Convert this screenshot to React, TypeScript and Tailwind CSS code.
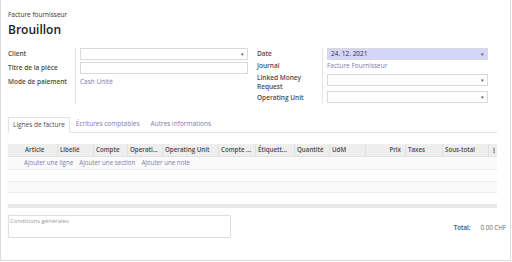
const font = { fontFamily: '"Open Sans", "Noto Sans", sans-serif' };

function Caret() {
  return <span className="absolute right-[3px] top-[3px] text-[5px] leading-none text-[#555]">▾</span>;
}

function Input({ bg = 'bg-white', caret = true, children }: { bg?: string; caret?: boolean; children?: React.ReactNode }) {
  return (
    <div className={`relative h-[12px] border border-[#d9d9d9] ${bg} pl-[3px] text-[6.5px] leading-[10px] text-[#333]`}>
      {children}
      {caret && <Caret />}
    </div>
  );
}

const cols: { label: string; w: string; right?: boolean }[] = [
  { label: '', w: 'w-[15px]' },
  { label: 'Article', w: 'w-[35px]' },
  { label: 'Libellé', w: 'w-[36px]' },
  { label: 'Compte', w: 'w-[34px]' },
  { label: 'Operati...', w: 'w-[35px]' },
  { label: 'Operating Unit', w: 'w-[56px]' },
  { label: 'Compte ...', w: 'w-[37px]' },
  { label: 'Étiquett...', w: 'w-[39px]' },
  { label: 'Quantité', w: 'w-[35px]' },
  { label: 'UdM', w: 'w-[36px]' },
  { label: 'Prix', w: 'w-[40px]', right: true },
  { label: 'Taxes', w: 'w-[37px]' },
  { label: 'Sous-total', w: 'w-[46px]' },
  { label: '⋮', w: 'flex-1' },
];

export default function App() {
  return (
    <div className="h-[262px] w-[512px] overflow-hidden bg-white" style={font}>
      <div className="h-[261px] w-[511px] border-b border-l border-r border-[#dcdcdc] bg-white pl-[7px] pr-[13px]">
        <div className="pt-[10px] text-[6.5px] text-[#333]">Facture fournisseur</div>
        <div className="mt-[2px] text-[12px] font-semibold leading-[15px] text-[#222]">Brouillon</div>

        <div className="mt-[11px] flex">
          <div className="flex w-[240px]">
            <div className="flex w-[68px] flex-col gap-[2px] border-r border-[#e5e5e5] text-[6.5px] font-semibold text-[#4c4c4c]">
              <div className="flex h-[12px] items-center">Client</div>
              <div className="flex h-[12px] items-center">Titre de la pièce</div>
              <div className="flex h-[12px] items-center">Mode de paiement</div>
            </div>
            <div className="ml-[4px] flex flex-1 flex-col gap-[2px]">
              <Input />
              <Input caret={false} />
              <div className="flex h-[12px] items-center text-[6.5px] text-[#7c7bad]">Cash Unité</div>
            </div>
          </div>

          <div className="ml-[9px] flex w-[231px]">
            <div className="flex w-[66px] flex-col border-r border-[#e5e5e5] pr-[2px] text-[6.5px] font-semibold text-[#4c4c4c]">
              <div className="flex h-[12px] items-center">Date</div>
              <div className="mt-[1px] flex h-[11px] items-center">Journal</div>
              <div className="mt-[1px] leading-[9px]">Linked Money<br />Request</div>
              <div className="mt-[1px] flex h-[12px] items-center">Operating Unit</div>
            </div>
            <div className="ml-[4px] flex flex-1 flex-col">
              <Input bg="bg-[#d4d4fc]">24. 12. 2021</Input>
              <div className="mt-[1px] flex h-[11px] items-center text-[6.5px] text-[#7c7bad]">Facture Fournisseur</div>
              <div className="mt-[2px]"><Input /></div>
              <div className="mt-[5px]"><Input /></div>
            </div>
          </div>
        </div>

        <div className="mt-[13px] flex h-[16px] border-b border-[#e2e2e2] text-[6.5px]">
          <div className="-mb-px flex items-center border border-b-white border-[#e2e2e2] bg-white px-[4px] text-[#4c4c4c]">Lignes de facture</div>
          <div className="flex items-center px-[6px] text-[#7c7bad]">Écritures comptables</div>
          <div className="flex items-center px-[5px] text-[#7c7bad]">Autres informations</div>
        </div>

        <div className="mt-[11px]">
          <div className="flex h-[13px] items-center border-b border-[#e0e0e0] bg-[#eeeeee] text-[6.2px] font-semibold text-[#4c4c4c]">
            {cols.map((c, i) => (
              <div
                key={i}
                className={`flex h-full items-center ${c.w} ${c.right ? 'justify-end pr-[4px]' : 'pl-[2px]'} ${i > 0 && i < cols.length - 1 ? 'border-r border-[#e0e0e0]' : ''} ${i === cols.length - 1 ? 'justify-center text-[#333]' : ''} whitespace-nowrap overflow-hidden`}
              >
                {c.label}
              </div>
            ))}
          </div>
          <div className="flex h-[13px] items-center gap-[6px] border-b border-[#ececec] bg-[#fafafa] pl-[16px] text-[6.2px] text-[#7c7bad]">
            <span>Ajouter une ligne</span>
            <span>Ajouter une section</span>
            <span>Ajouter une note</span>
          </div>
          <div className="h-[12px] border-b border-[#ececec]" />
          <div className="h-[11px] border-b border-[#ececec] bg-[#fafafa]" />
          <div className="mt-[11px] h-[4px] bg-[#e9e9e9]" />
        </div>

        <div className="mt-[7px] flex items-start">
          <div className="h-[23px] w-[223px] rounded-[1px] border border-[#dedede] pl-[1px] pt-[1px] text-[6px] text-[#999]">
            Conditions générales
          </div>
          <div className="ml-auto mr-[-9px] mt-[8px] flex gap-[10px] text-[6.2px]">
            <span className="font-semibold text-[#4c4c4c]">Total:</span>
            <span className="text-[#666]">0.00 CHF</span>
          </div>
        </div>
      </div>
    </div>
  );
}
